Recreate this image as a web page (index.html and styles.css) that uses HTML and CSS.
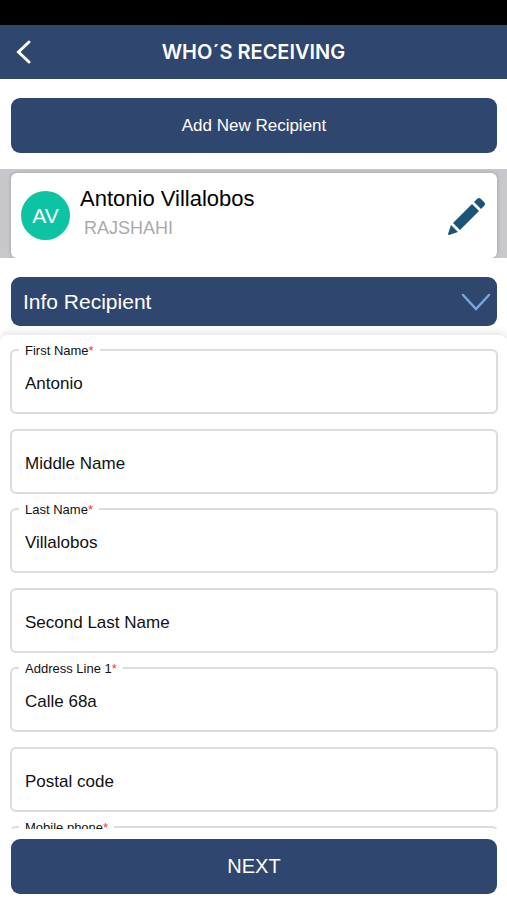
FILE: index.html
```html
<!DOCTYPE html>
<html lang="en">

<head>
    <meta charset="UTF-8">
    <meta name="viewport" content="width=device-width, initial-scale=1.0">
    <title>Who's Receiving</title>
    <link rel="stylesheet" href="styles.css">
</head>

<body>
    <div class="status-bar"></div>

    <header class="header">
        <button type="button" class="back-button" aria-label="Back">
            <svg width="16" height="26" viewBox="0 0 16 26">
                <path d="M13 3L2.500 13L13 23" fill="none" stroke="#fff" stroke-width="3" stroke-linecap="round" />
            </svg>
        </button>
        <h1>WHO´S RECEIVING</h1>
    </header>

    <div class="add-recipient">
        <button type="button" class="main-button">Add New Recipient</button>
    </div>

    <section class="recipients">
        <div class="recipient-card">
            <div class="avatar">AV</div>
            <div class="recipient-text">
                <h2>Antonio Villalobos</h2>
                <p>RAJSHAHI</p>
            </div>
            <button type="button" class="edit-button" aria-label="Edit recipient">
                <svg width="38" height="38" viewBox="0 0 38 38" fill="#1a5578">
                    <path d="M27 5L30 2Q32 0 34 2L37 5Q39 7 37 9L34 12Z" />
                    <path d="M25 7L32 14L13 33L6 26Z" />
                    <path d="M4 28L11 35L2 38Q1 38 1 37Z" />
                </svg>
            </button>
        </div>
    </section>

    <div class="info">
        <button type="button" class="info-toggle" aria-expanded="true">
            Info Recipient
            <svg width="30" height="18" viewBox="0 0 30 18">
                <path d="M2 2L15 16L28 2" fill="none" stroke="#7ba7dc" stroke-width="2.500" stroke-linecap="round" />
            </svg>
        </button>
    </div>

    <form class="recipient-form" id="recipientForm">
        <div class="field">
            <label for="firstName">First Name<span class="required">*</span></label>
            <input type="text" id="firstName" value="Antonio">
        </div>
        <div class="field optional">
            <input type="text" id="middleName" placeholder="Middle Name" aria-label="Middle Name">
        </div>
        <div class="field">
            <label for="lastName">Last Name<span class="required">*</span></label>
            <input type="text" id="lastName" value="Villalobos">
        </div>
        <div class="field optional">
            <input type="text" id="secondLastName" placeholder="Second Last Name" aria-label="Second Last Name">
        </div>
        <div class="field">
            <label for="address">Address Line 1<span class="required">*</span></label>
            <input type="text" id="address" value="Calle 68a">
        </div>
        <div class="field optional">
            <input type="text" id="postalCode" placeholder="Postal code" aria-label="Postal code">
        </div>
        <div class="field">
            <label for="mobilePhone">Mobile phone<span class="required">*</span></label>
            <input type="tel" id="mobilePhone">
        </div>
    </form>

    <footer class="footer">
        <button type="submit" form="recipientForm" class="main-button next-button">NEXT</button>
    </footer>
</body>

</html>
```
FILE: styles.css
```css
* {
    box-sizing: border-box;
}

body {
    display: flex;
    flex-direction: column;
    height: 100vh;
    margin: 0;
    background-color: #fff;
    color: #111;
    font-family: "Liberation Sans", Arial, sans-serif;
}

button,
input {
    font-family: inherit;
}

button {
    padding: 0;
    border: none;
    background: none;
    cursor: pointer;
}

svg {
    display: block;
    overflow: visible;
}

.status-bar {
    flex: none;
    height: 25px;
    background-color: #000;
}

.header {
    display: grid;
    grid-template-columns: 48px 1fr 48px;
    align-items: center;
    flex: none;
    height: 54px;
    background-color: #2f466f;
    color: #fff;
}

.header h1 {
    margin: 0;
    font-family: Inter, sans-serif;
    font-size: 20px;
    font-weight: 600;
    text-align: center;
}

.back-button {
    justify-self: center;
}

.add-recipient {
    padding: 19px 10px 16px 11px;
}

.main-button {
    display: block;
    width: 100%;
    height: 55px;
    border-radius: 9px;
    background-color: #2f466f;
    color: #fff;
    font-size: 17px;
}

.recipients {
    padding: 4px 10px 0 11px;
    overflow: hidden;
    background-color: #c8c8cc;
}

.recipient-card {
    display: flex;
    align-items: center;
    height: 85px;
    padding: 0 12px 0 10px;
    border-radius: 6px;
    background-color: #fff;
    box-shadow: 0 0 4px rgba(0, 0, 0, 0.2);
}

.avatar {
    display: flex;
    align-items: center;
    justify-content: center;
    width: 49px;
    height: 49px;
    border-radius: 50%;
    background-color: #0cc4a4;
    color: #fff;
    font-size: 21px;
}

.recipient-text {
    flex: 1;
    padding: 0 10px 6px;
}

.recipient-text h2 {
    margin: 0;
    color: #000;
    font-size: 22px;
    font-weight: normal;
    line-height: 30px;
}

.recipient-text p {
    margin: 0;
    padding-left: 4px;
    color: #aaa;
    font-size: 18px;
    line-height: 28px;
}

.info {
    padding: 19px 10px 9px 11px;
}

.info-toggle {
    display: flex;
    align-items: center;
    justify-content: space-between;
    width: 100%;
    height: 49px;
    padding: 0 6px 0 12px;
    border-radius: 9px;
    background-color: #2f466f;
    color: #fff;
    font-size: 21px;
}

.recipient-form {
    flex: 1;
    min-height: 0;
    padding: 14px 9px 0 10px;
    overflow-y: auto;
    scrollbar-width: none;
    border-radius: 8px 8px 0 0;
    box-shadow: 0 -2px 8px rgba(0, 0, 0, 0.12);
}

.field {
    position: relative;
    height: 65px;
    margin-bottom: 15px;
}

.field.optional {
    margin-bottom: 14px;
}

/* Label sits on top of the input border */
.field label {
    position: absolute;
    top: -6px;
    left: 9px;
    padding: 0 6px;
    background-color: #fff;
    font-size: 13px;
    line-height: 16px;
}

.field input {
    width: 100%;
    height: 100%;
    padding: 4px 13px 0;
    border: 2px solid #dcdcdc;
    border-radius: 6px;
    background-color: #fff;
    color: #111;
    font-size: 17px;
}

.field input::placeholder {
    color: #111;
    opacity: 1;
}

.required {
    color: #f33;
}

.footer {
    position: relative;
    flex: none;
    padding: 10px 10px 6px 11px;
    background-color: #fff;
}

.next-button {
    font-size: 20px;
}
```
